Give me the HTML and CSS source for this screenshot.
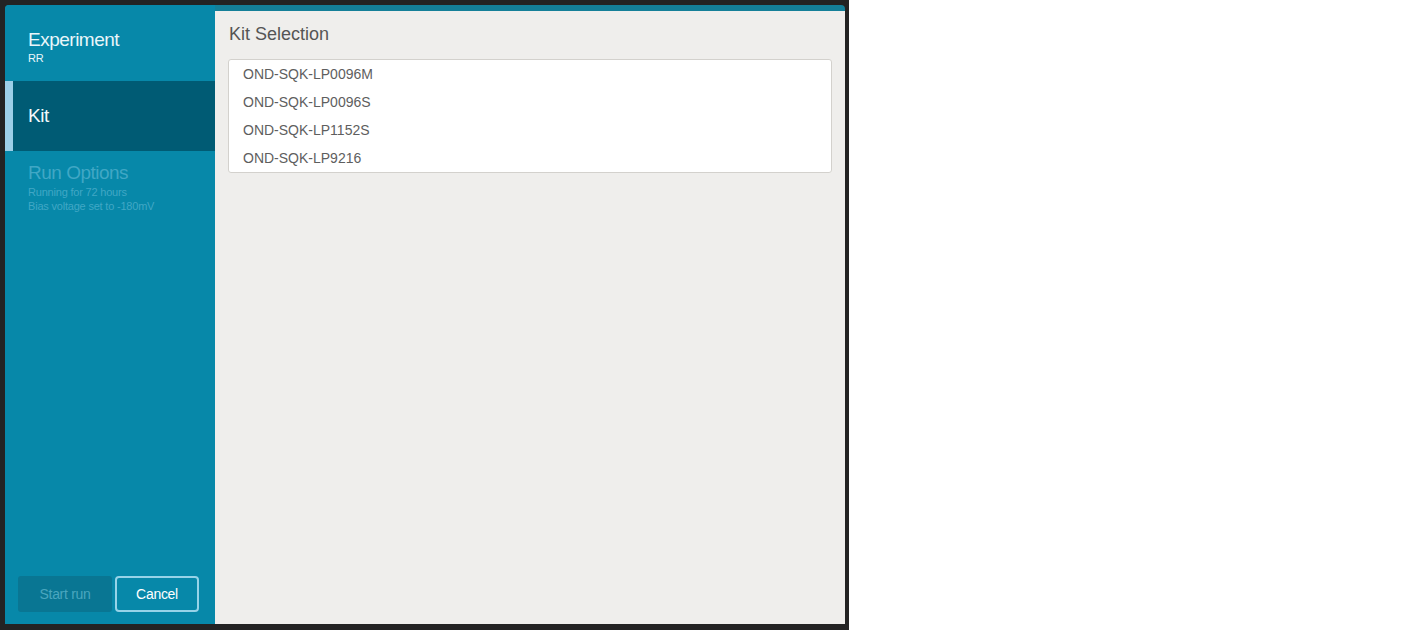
FILE: index.html
```html
<!DOCTYPE html>
<html>
<head>
<meta charset="utf-8">
<link rel="stylesheet" href="styles.css">
</head>
<body>
<div class="backdrop">
  <div class="modal">
    <aside class="sidebar">
      <div class="step">
        <div class="step-title">Experiment</div>
        <div class="step-sub">RR</div>
      </div>
      <div class="step step-active">
        <div class="step-title">Kit</div>
      </div>
      <div class="step step-disabled">
        <div class="step-title">Run Options</div>
        <div class="step-sub">Running for 72 hours</div>
        <div class="step-sub">Bias voltage set to -180mV</div>
      </div>
      <div class="actions">
        <button class="btn btn-start">Start run</button>
        <button class="btn btn-cancel">Cancel</button>
      </div>
    </aside>
    <main class="content">
      <h2 class="heading">Kit Selection</h2>
      <ul class="kit-list">
        <li>OND-SQK-LP0096M</li>
        <li>OND-SQK-LP0096S</li>
        <li>OND-SQK-LP1152S</li>
        <li>OND-SQK-LP9216</li>
      </ul>
    </main>
  </div>
</div>
</body>
</html>
```

FILE: styles.css
```css
* { box-sizing: border-box; }
html, body { margin: 0; padding: 0; background: #ffffff; }
body { font-family: "Liberation Sans", Arial, sans-serif; }

.backdrop {
  width: 849px;
  height: 630px;
  background: #232323;
  padding: 5px 4px 6px 5px;
}

.modal {
  display: flex;
  height: 619px;
  background: #147f98;
  border-radius: 4px 4px 0 0;
  overflow: hidden;
}

.sidebar {
  width: 210px;
  background: #0788a9;
  display: flex;
  flex-direction: column;
  color: #e9f6fa;
}

.step { padding-left: 23px; }
.step:first-child { height: 76px; padding-top: 25px; }
.step-title { font-size: 19px; letter-spacing: -0.5px; line-height: 20px; }
.step-sub { font-size: 11px; line-height: 13.5px; letter-spacing: -0.2px; }
.step:first-child .step-sub { margin-top: 2px; }

.step-active {
  height: 70px;
  background: #005b74;
  border-left: 8px solid #9ccfe8;
  padding-left: 15px;
  padding-top: 25px;
  color: #f2fafc;
}

.step-disabled { color: #40a7c5; padding-top: 12px; }
.step-disabled .step-title { margin-bottom: 3px; }

.actions {
  margin-top: auto;
  display: flex;
  gap: 3px;
  padding: 0 16px 12px 13px;
}

.btn {
  height: 36px;
  font-family: "Liberation Sans", Arial, sans-serif;
  font-size: 14px;
  letter-spacing: -0.3px;
  border-radius: 3px;
  cursor: pointer;
}
.btn-start {
  width: 94px;
  background: #097693;
  border: none;
  color: #4aa6bf;
}
.btn-cancel {
  flex: 1;
  background: transparent;
  border: 2px solid #97d3e8;
  border-radius: 4px;
  color: #ffffff;
}

.content {
  flex: 1;
  margin-top: 6px;
  background: #efeeec;
  padding: 11px 13px 0 13px;
}

.heading {
  margin: 0 0 13px 1px;
  font-weight: normal;
  font-size: 18px;
  line-height: 24px;
  color: #555555;
}

.kit-list {
  list-style: none;
  margin: 0;
  padding: 0;
  background: #ffffff;
  border: 1px solid #d3d1cd;
  border-radius: 3px;
}
.kit-list li {
  height: 28px;
  line-height: 28px;
  padding-left: 14px;
  font-size: 14px;
  color: #5e5e5e;
}
```
